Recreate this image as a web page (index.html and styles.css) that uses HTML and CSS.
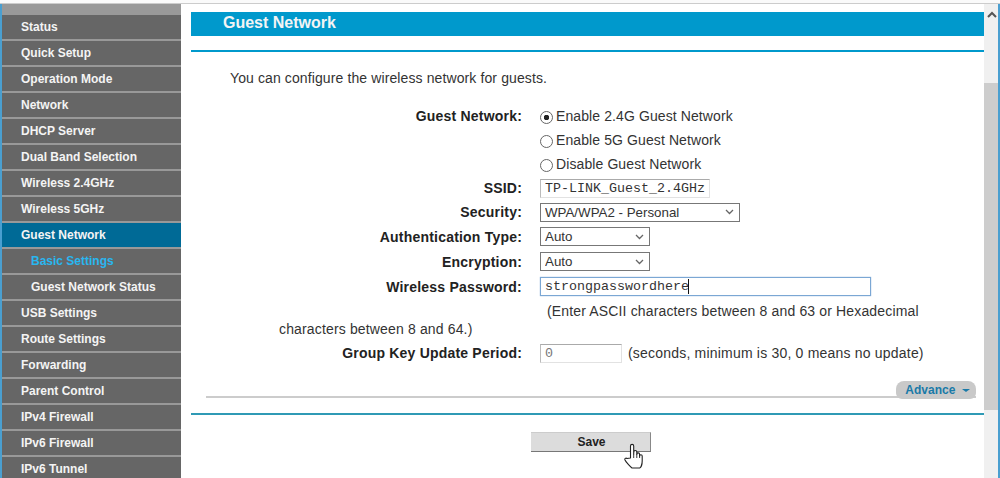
FILE: index.html
```html
<!DOCTYPE html>
<html lang="en">
<head>
    <meta charset="UTF-8">
    <title>Guest Network</title>
    <link rel="stylesheet" href="styles.css">
</head>
<body>
    <div class="top-strip"></div>
    <div class="page">
        <nav class="sidebar">
            <a class="menu-item">Status</a>
            <a class="menu-item">Quick Setup</a>
            <a class="menu-item">Operation Mode</a>
            <a class="menu-item">Network</a>
            <a class="menu-item">DHCP Server</a>
            <a class="menu-item">Dual Band Selection</a>
            <a class="menu-item">Wireless 2.4GHz</a>
            <a class="menu-item">Wireless 5GHz</a>
            <a class="menu-item active">Guest Network</a>
            <a class="menu-item sub current">Basic Settings</a>
            <a class="menu-item sub">Guest Network Status</a>
            <a class="menu-item">USB Settings</a>
            <a class="menu-item">Route Settings</a>
            <a class="menu-item">Forwarding</a>
            <a class="menu-item">Parent Control</a>
            <a class="menu-item">IPv4 Firewall</a>
            <a class="menu-item">IPv6 Firewall</a>
            <a class="menu-item">IPv6 Tunnel</a>
        </nav>

        <main class="content">
            <h1 class="title-bar">Guest Network</h1>
            <div class="rule-blue"></div>
            <p class="intro">You can configure the wireless network for guests.</p>

            <div class="form">
                <div class="row">
                    <label class="field-label">Guest Network:</label>
                    <label class="radio-line"><input type="radio" name="guest" checked>Enable 2.4G Guest Network</label>
                </div>
                <div class="row">
                    <span class="field-label"></span>
                    <label class="radio-line"><input type="radio" name="guest">Enable 5G Guest Network</label>
                </div>
                <div class="row">
                    <span class="field-label"></span>
                    <label class="radio-line"><input type="radio" name="guest">Disable Guest Network</label>
                </div>
                <div class="row">
                    <label class="field-label">SSID:</label>
                    <input class="text-input ssid" type="text" value="TP-LINK_Guest_2.4GHz">
                </div>
                <div class="row">
                    <label class="field-label">Security:</label>
                    <select class="select wide"><option>WPA/WPA2 - Personal</option></select>
                </div>
                <div class="row tall">
                    <label class="field-label">Authentication Type:</label>
                    <select class="select"><option>Auto</option></select>
                </div>
                <div class="row tall">
                    <label class="field-label">Encryption:</label>
                    <select class="select"><option>Auto</option></select>
                </div>
                <div class="row tall">
                    <label class="field-label">Wireless Password:</label>
                    <div class="password-box">
                        <input class="text-input password" type="text" value="strongpasswordhere">
                        <span class="caret"></span>
                    </div>
                </div>
                <p class="note">(Enter ASCII characters between 8 and 63 or Hexadecimal characters between 8 and 64.)</p>
                <div class="row group-row">
                    <label class="field-label">Group Key Update Period:</label>
                    <input class="text-input period" type="text" value="0">
                    <span class="hint">(seconds, minimum is 30, 0 means no update)</span>
                </div>
            </div>

            <div class="advance-line">
                <button class="advance">Advance <span class="arrow"></span></button>
            </div>
            <div class="rule-teal"></div>
            <div class="actions">
                <button class="save">Save</button>
                <svg class="hand" width="20" height="26" viewBox="0 0 20 26">
                    <path d="M6.5 15V3a1.6 1.6 0 0 1 3.2 0v8l.1-2a1.5 1.5 0 0 1 3 0v2.300a1.400 1.400 0 0 1 2.800 0V13a1.300 1.300 0 0 1 2.600 0v5c0 3.500-1.500 6.500-2.500 7H8c-1.500-1-6-6-7-8-.6-1.300.8-2.400 2-1.500z" fill="#fff" stroke="#222" stroke-width="1.100" stroke-linejoin="round"/>
                    <path d="M9.700 11v4M12.800 11v4M15.600 12v3" fill="none" stroke="#222" stroke-width=".9"/>
                </svg>
            </div>
        </main>

        <div class="scrollbar">
            <svg class="scroll-up" width="10" height="7" viewBox="0 0 10 7"><path d="M1 6l4-4 4 4" fill="none" stroke="#555" stroke-width="2"/></svg>
            <div class="thumb"></div>
        </div>
    </div>
</body>
</html>
```

FILE: styles.css
```css
html, body {
    height: 100%;
}

body {
    margin: 0;
    background-color: #fff;
    font-family: "Liberation Sans", Arial, sans-serif;
    color: #222;
    overflow: hidden;
}

.top-strip {
    height: 3px;
    background-color: #fafafa;
    border-bottom: 1px solid #ccc;
}

.page {
    display: flex;
    height: 474px;
    border-left: 2px solid #4a9fd0;
    border-right: 2px solid #4a9fd0;
}

/* left menu */
.sidebar {
    flex: none;
    width: 179px;
    margin-right: 10px;
    padding-top: 11px;
    background-color: #999;
    overflow: hidden;
}

.menu-item {
    display: block;
    height: 24px;
    margin-bottom: 2px;
    padding-left: 19px;
    background-color: #666;
    color: #f4f4f4;
    font-size: 12px;
    font-weight: bold;
    line-height: 25px;
}

.menu-item.active {
    background-color: #006a96;
}

.menu-item.sub {
    padding-left: 29px;
}

.menu-item.current {
    color: #29b6f0;
}

/* main panel */
.content {
    flex: none;
    width: 793px;
    position: relative;
}

.title-bar {
    margin: 8px 0 0;
    height: 24px;
    padding-left: 32px;
    background-color: #0099cc;
    color: #f4f4f4;
    font-size: 16px;
    font-weight: bold;
    line-height: 21px;
}

.rule-blue {
    height: 2px;
    margin-top: 14px;
    background-color: #0099cc;
}

.intro {
    margin: 18px 0 0 39px;
    font-size: 14px;
    line-height: 16px;
    letter-spacing: .11px;
    color: #333;
}

.form {
    margin-top: 18px;
}

.row {
    display: flex;
    align-items: center;
    height: 24px;
}

.row.tall {
    height: 25px;
}

.field-label {
    flex: none;
    width: 331px;
    margin-right: 18px;
    text-align: right;
    font-size: 14px;
    font-weight: bold;
    letter-spacing: .2px;
}

.radio-line {
    display: flex;
    align-items: center;
    font-size: 14px;
    letter-spacing: .1px;
    color: #333;
}

.radio-line input {
    appearance: none;
    width: 13px;
    height: 13px;
    margin: 2px 3px 0 0;
    border: 1px solid #666;
    border-radius: 50%;
    background-color: #fff;
}

.radio-line input:checked {
    background-image: radial-gradient(circle, #222 0, #222 2.500px, transparent 3px);
}

.text-input {
    box-sizing: border-box;
    height: 19px;
    padding: 0 4px;
    border: 1px solid #e2e2e2;
    border-top-color: #aaa;
    border-left-color: #bbb;
    font-family: "Liberation Mono", monospace;
    font-size: 13.333px;
    color: #333;
    background-color: #fff;
    outline: none;
}

.ssid {
    width: 170px;
}

.period {
    width: 82px;
    color: #777;
}

.select {
    appearance: none;
    box-sizing: border-box;
    width: 110px;
    height: 19px;
    padding: 0 0 0 4px;
    border: 1px solid #777;
    border-radius: 0;
    font-family: "Liberation Sans", Arial, sans-serif;
    font-size: 13.333px;
    color: #333;
    background-color: #fff;
    background-image: url("data:image/svg+xml,%3Csvg xmlns='http://www.w3.org/2000/svg' width='9' height='6'%3E%3Cpath d='M1 1l3.500 3.500L8 1' fill='none' stroke='%23666' stroke-width='1.300'/%3E%3C/svg%3E");
    background-repeat: no-repeat;
    background-position: right 5px center;
}

.select.wide {
    width: 200px;
}

.password-box {
    position: relative;
    width: 331px;
}

.password {
    display: block;
    width: 100%;
    border: 1px solid #7ba7d4;
    box-shadow: 0 0 1px #7ba7d4;
}

.caret {
    position: absolute;
    left: 148px;
    top: 2px;
    width: 1px;
    height: 15px;
    background-color: #111;
}

.note {
    margin: 3px 0 0 88px;
    width: 660px;
    text-indent: 268px;
    font-size: 14px;
    line-height: 18px;
    letter-spacing: .15px;
    color: #333;
}

.group-row {
    margin-top: 3px;
}

.hint {
    margin-left: 6px;
    font-size: 14px;
    letter-spacing: .2px;
    color: #333;
}

.advance-line {
    position: relative;
    height: 2px;
    margin: 31px 8px 0 15px;
    background-color: #ccc;
}

.advance {
    position: absolute;
    right: 0;
    bottom: -1px;
    width: 80px;
    height: 18px;
    padding: 0 0 0 3px;
    border: 0;
    border-radius: 8px 8px 6px 6px;
    background-color: #c9c9c9;
    color: #1a7aa8;
    font-family: "Liberation Sans", Arial, sans-serif;
    font-size: 12px;
    font-weight: bold;
}

.arrow {
    display: inline-block;
    margin-left: 3px;
    vertical-align: 2px;
    border-left: 4px solid transparent;
    border-right: 4px solid transparent;
    border-top: 3px solid #1a7aa8;
}

.rule-teal {
    height: 2px;
    margin-top: 15px;
    background-color: #2f9ab5;
}

.actions {
    position: relative;
    padding: 17px 0 0 340px;
}

.save {
    display: block;
    box-sizing: border-box;
    width: 120px;
    height: 20px;
    padding: 0 0 0 2px;
    border: 0;
    border-top: 1px solid #ccc;
    border-right: 1px solid #888;
    border-bottom: 1px solid #777;
    background-color: #dcdcdc;
    color: #222;
    font-family: "Liberation Sans", Arial, sans-serif;
    font-size: 12px;
    font-weight: bold;
}

.hand {
    position: absolute;
    left: 433px;
    top: 28px;
}

/* scrollbar on the right */
.scrollbar {
    flex: none;
    position: relative;
    width: 14px;
    background-color: #f0f0f0;
}

.scroll-up {
    position: absolute;
    left: 3px;
    top: 7px;
}

.thumb {
    position: absolute;
    top: 79px;
    left: 0;
    width: 100%;
    height: 327px;
    background-color: #cdcdcd;
}
```
